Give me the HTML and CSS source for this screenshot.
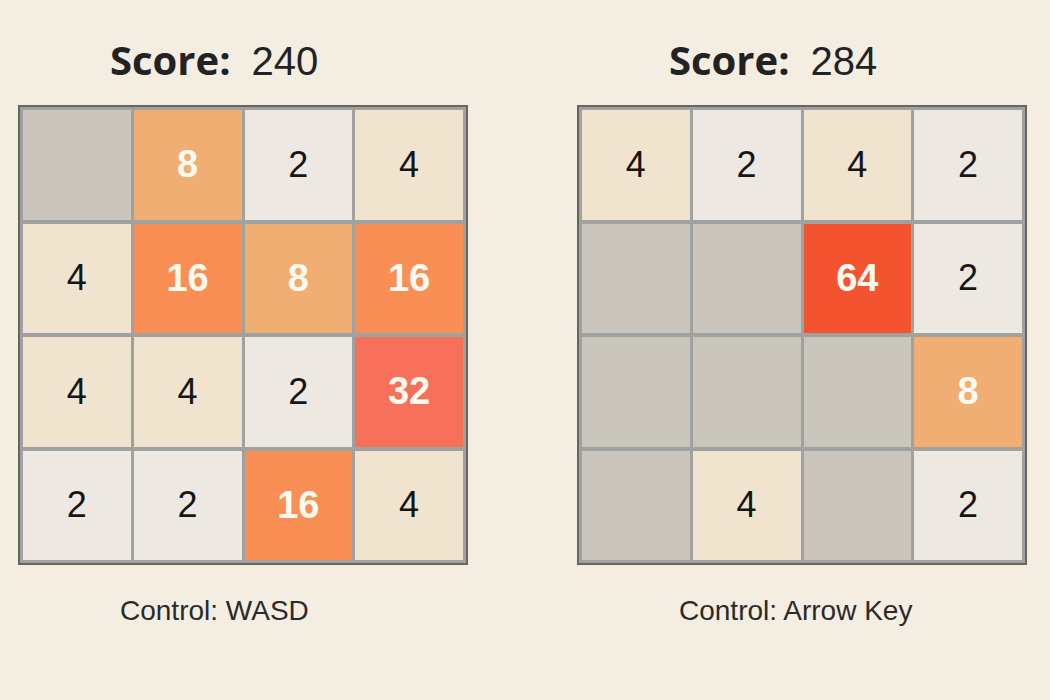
FILE: index.html
```html
<!DOCTYPE html>
<html>
<head>
	<meta charset="UTF-8">
	<title>2048 - two players</title>
	<link rel="stylesheet" href="styles.css">
</head>
<body>
	<div class="games">

		<div class="game">
			<h2 class="score"><b>Score:</b><span class="score_num">240</span></h2>
			<div class="board">
				<div class="tile"></div>
				<div class="tile t8">8</div>
				<div class="tile t2">2</div>
				<div class="tile t4">4</div>

				<div class="tile t4">4</div>
				<div class="tile t16">16</div>
				<div class="tile t8">8</div>
				<div class="tile t16">16</div>

				<div class="tile t4">4</div>
				<div class="tile t4">4</div>
				<div class="tile t2">2</div>
				<div class="tile t32">32</div>

				<div class="tile t2">2</div>
				<div class="tile t2">2</div>
				<div class="tile t16">16</div>
				<div class="tile t4">4</div>
			</div>
			<p class="control">Control: WASD</p>
		</div>

		<div class="game">
			<h2 class="score"><b>Score:</b><span class="score_num">284</span></h2>
			<div class="board">
				<div class="tile t4">4</div>
				<div class="tile t2">2</div>
				<div class="tile t4">4</div>
				<div class="tile t2">2</div>

				<div class="tile"></div>
				<div class="tile"></div>
				<div class="tile t64">64</div>
				<div class="tile t2">2</div>

				<div class="tile"></div>
				<div class="tile"></div>
				<div class="tile"></div>
				<div class="tile t8">8</div>

				<div class="tile"></div>
				<div class="tile t4">4</div>
				<div class="tile"></div>
				<div class="tile t2">2</div>
			</div>
			<p class="control">Control: Arrow Key</p>
		</div>

	</div>
</body>
</html>
```

FILE: styles.css
```css
body{
	margin:0;
	background:#f4ede1;
	font-family:"Liberation Sans", Arial, sans-serif;
	color:#1e1e1e;
}

.games{
	display:flex;
	justify-content:space-between;
	padding:0 23px 0 18px;
}

.game{
	width:450px;
	padding-top:37px;
}

/* score line */
.score{
	margin:0 0 21px 0;
	padding-left:92px;
	font-size:40px;
	line-height:46px;
	font-weight:normal;
}
.score b{
	font-family:"Open Sans", sans-serif;
	font-weight:700;
	color:#222;
}
.score_num{
	margin-left:21px;
	font-size:40px;
	color:#222;
}

/* board */
.board{
	display:grid;
	grid-template-columns:repeat(4, 1fr);
	grid-template-rows:repeat(4, 109.5px);
	gap:4px 3px;
	padding:3px;
	background:#a0a2a1;
	border:2px solid #69645f;
}

.tile{
	background:#cbc6bc;
	display:flex;
	align-items:center;
	justify-content:center;
	font-size:36px;
	color:#151515;
}
.t2{ background:#ede9e2; }
.t4{ background:#f0e4cf; }
.t8,.t16,.t32,.t64{
	color:#fffaf0;
	font-weight:bold;
	font-size:38px;
}
.t8{ background:#f1ae73; }
.t16{ background:#f98f55; }
.t32{ background:#f6705a; }
.t64{ background:#f4532f; }

/* keys hint */
.control{
	margin:30px 0 0 0;
	padding-left:102px;
	font-size:28px;
	line-height:32px;
	color:#2a2a2a;
}
```
